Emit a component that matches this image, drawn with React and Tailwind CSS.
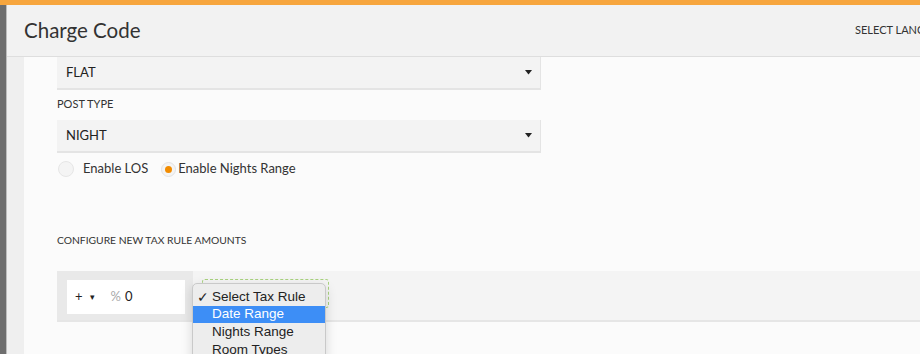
import React from "react";

function Caret() {
  return (
    <svg width="7" height="5" viewBox="0 0 7 5" className="block">
      <path d="M0 0 H7 L3.5 4.5 Z" fill="#222" />
    </svg>
  );
}

function SelectBox({ value }) {
  return (
    <div className="w-[484px] h-[33px] bg-[#f3f3f3] border-b-2 border-r border-[#e4e4e4] flex items-center justify-between pl-[9px] pr-[8px]">
      <span className="text-[13px] text-[#222]">{value}</span>
      <Caret />
    </div>
  );
}

export default function App() {
  return (
    <div
      className="w-[920px] h-[354px] relative overflow-hidden bg-[#fbfbfb] flex flex-col"
      style={{ fontFamily: "Lato, 'Noto Sans', sans-serif" }}
    >
      <div className="h-[5px] bg-[#f7a63e] shrink-0" />
      <div className="flex flex-1 min-h-0">
        <div className="w-[6px] bg-[#6e6e6e] shrink-0" />
        <div className="w-px bg-[#bdbdbd] shrink-0" />
        <div className="flex-1 flex flex-col min-w-0">
          <div className="h-[52px] shrink-0 bg-[#f2f2f2] border-b border-[#dedede] flex items-center justify-between pl-[17px]">
            <span className="text-[20.5px] text-[#333] leading-none">Charge Code</span>
            <span className="text-[11px] text-[#333] whitespace-nowrap w-[65px] overflow-hidden">SELECT LANGUAGE</span>
          </div>
          <div className="flex flex-1 min-h-0">
            <div className="w-[17px] bg-[#efefef] shrink-0" />
            <div className="flex-1 pl-[33px] flex flex-col">
              <SelectBox value="FLAT" />
              <div className="mt-[7px] h-[14px] leading-[14px] text-[11px] text-[#333]">POST TYPE</div>
              <div className="mt-[9px]">
                <SelectBox value="NIGHT" />
              </div>
              <div className="mt-[8px] h-[16px] flex items-center text-[13px] text-[#333]">
                <span className="ml-px w-[16px] h-[16px] rounded-full border border-[#e6e6e6] bg-[#f4f4f4] shrink-0" />
                <span className="ml-[9px]">Enable LOS</span>
                <span className="ml-[13px] w-[15px] h-[15px] rounded-full border border-[#e2e2e2] bg-[#f4f4f4] flex items-center justify-center shrink-0">
                  <span className="w-[7px] h-[7px] rounded-full bg-[#f28c00]" />
                </span>
                <span className="ml-[2px]">Enable Nights Range</span>
              </div>
              <div className="mt-[56px] h-[14px] leading-[14px] text-[10.3px] text-[#333]">CONFIGURE NEW TAX RULE AMOUNTS</div>
              <div className="mt-[24px] h-[51px] flex bg-[#f4f4f4] border-b-2 border-[#e6e6e6]">
                <div className="w-[136px] bg-[#e9e9e9] pl-[10px] pt-[9px]">
                  <div className="w-[118px] h-[34px] bg-white flex items-center text-[13px]">
                    <span className="ml-[8px] text-[#222]">+</span>
                    <span className="ml-[7px] text-[9px] text-[#222]">▾</span>
                    <span className="ml-[16px] text-[#aaa]">%</span>
                    <span className="ml-[4px] text-[#222]">0</span>
                  </div>
                </div>
                <div className="ml-[9px] mt-[8px] w-[127px] h-[29px] border border-dashed border-[#a8d27e] rounded-[3px]" />
              </div>
            </div>
          </div>
        </div>
      </div>
      <div
        className="absolute left-[192px] top-[283px] w-[134px] h-[90px] bg-[#ededed] border border-[#c9c9c9] rounded-[5px] shadow-[0_4px_12px_rgba(0,0,0,0.15)] pt-[4px] text-[13.5px] text-[#222]"
        style={{ fontFamily: "'Liberation Sans', Arial, sans-serif" }}
      >
        <div className="h-[18px] flex items-center">
          <span className="w-[19px] pl-[4px] text-[14px] leading-none">✓</span>
          <span>Select Tax Rule</span>
        </div>
        <div className="h-[17px] flex items-center bg-[#3d8ef6] text-white">
          <span className="w-[19px]" />
          <span>Date Range</span>
        </div>
        <div className="h-[18px] flex items-center">
          <span className="w-[19px]" />
          <span>Nights Range</span>
        </div>
        <div className="h-[18px] flex items-center">
          <span className="w-[19px]" />
          <span>Room Types</span>
        </div>
      </div>
    </div>
  );
}
